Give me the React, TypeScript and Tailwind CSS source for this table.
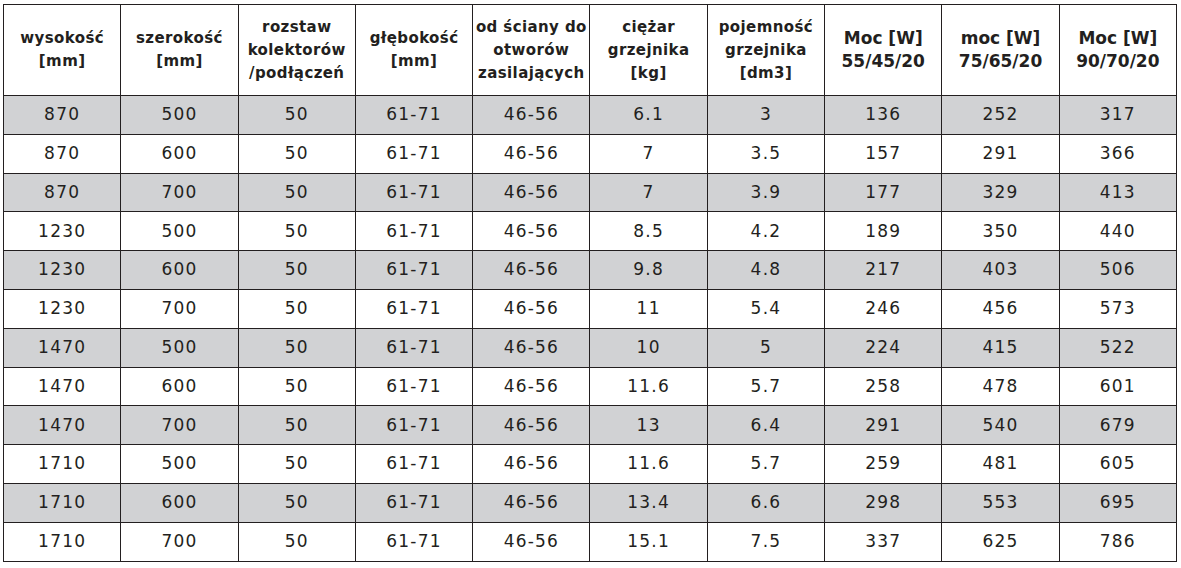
const headers: { lines: string[]; big?: boolean }[] = [
  { lines: ['wysokość', '[mm]'] },
  { lines: ['szerokość', '[mm]'] },
  { lines: ['rozstaw', 'kolektorów', '/podłączeń'] },
  { lines: ['głębokość', '[mm]'] },
  { lines: ['od ściany do', 'otworów', 'zasilających'] },
  { lines: ['ciężar', 'grzejnika', '[kg]'] },
  { lines: ['pojemność', 'grzejnika', '[dm3]'] },
  { lines: ['Moc [W]', '55/45/20'], big: true },
  { lines: ['moc [W]', '75/65/20'], big: true },
  { lines: ['Moc [W]', '90/70/20'], big: true },
]

const rows: string[][] = [
  ['870', '500', '50', '61-71', '46-56', '6.1', '3', '136', '252', '317'],
  ['870', '600', '50', '61-71', '46-56', '7', '3.5', '157', '291', '366'],
  ['870', '700', '50', '61-71', '46-56', '7', '3.9', '177', '329', '413'],
  ['1230', '500', '50', '61-71', '46-56', '8.5', '4.2', '189', '350', '440'],
  ['1230', '600', '50', '61-71', '46-56', '9.8', '4.8', '217', '403', '506'],
  ['1230', '700', '50', '61-71', '46-56', '11', '5.4', '246', '456', '573'],
  ['1470', '500', '50', '61-71', '46-56', '10', '5', '224', '415', '522'],
  ['1470', '600', '50', '61-71', '46-56', '11.6', '5.7', '258', '478', '601'],
  ['1470', '700', '50', '61-71', '46-56', '13', '6.4', '291', '540', '679'],
  ['1710', '500', '50', '61-71', '46-56', '11.6', '5.7', '259', '481', '605'],
  ['1710', '600', '50', '61-71', '46-56', '13.4', '6.6', '298', '553', '695'],
  ['1710', '700', '50', '61-71', '46-56', '15.1', '7.5', '337', '625', '786'],
]

export default function App() {
  return (
    <div className="min-h-screen bg-white pl-[3px] pt-[4px] text-[#231f20] [font-family:'DejaVu_Sans',sans-serif]">
      <table className="w-[1174px] table-fixed border-collapse">
        <thead>
          <tr className="h-[91px]">
            {headers.map((h, i) => (
              <th
                key={i}
                className={
                  h.big
                    ? 'border-[1.5px] border-[#231f20] p-0 text-center align-middle text-[17px] font-bold leading-[23px]'
                    : 'border-[1.5px] border-[#231f20] p-0 text-center align-middle text-[15px] font-bold leading-[23px] tracking-[0.4px]'
                }
              >
                {h.lines.map((l, j) => (
                  <div key={j} className="whitespace-nowrap">{l}</div>
                ))}
              </th>
            ))}
          </tr>
        </thead>
        <tbody>
          {rows.map((r, i) => (
            <tr key={i} className={i % 2 === 0 ? 'h-[38.8px] bg-[#d1d2d4]' : 'h-[38.8px] bg-white'}>
              {r.map((c, j) => (
                <td
                  key={j}
                  className="border-[1.5px] border-[#231f20] p-0 text-center align-middle text-[17px] tracking-[1.2px]"
                >
                  {c}
                </td>
              ))}
            </tr>
          ))}
        </tbody>
      </table>
    </div>
  )
}
